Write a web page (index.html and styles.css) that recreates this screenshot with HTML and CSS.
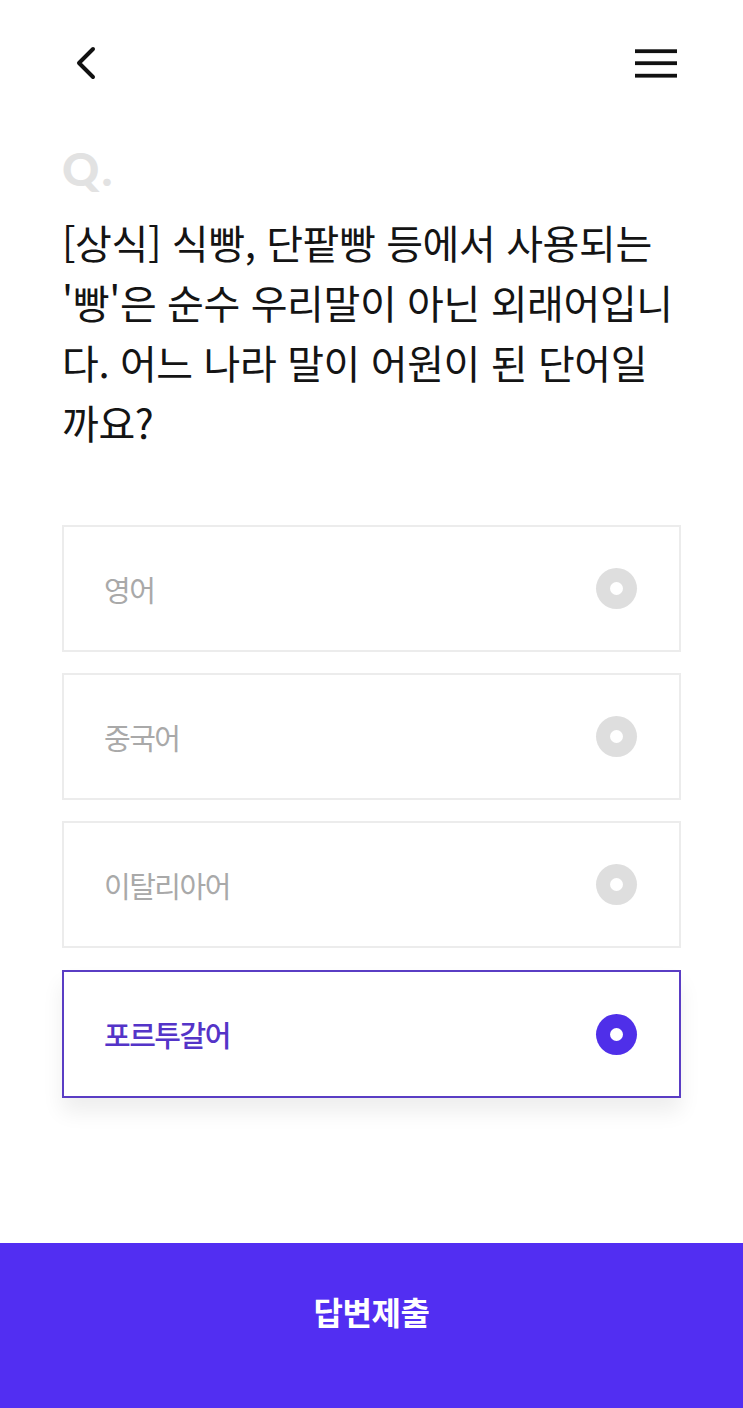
FILE: index.html
```html
<!DOCTYPE html>
<html lang="ko">
<head>
<meta charset="utf-8">
<title>Quiz</title>
<link rel="stylesheet" href="styles.css">
</head>
<body>
<div class="page">
  <header class="topbar">
    <button class="icon-btn back" aria-label="뒤로">
      <svg width="24" height="34" viewBox="0 0 24 34"><path d="M19 3 L5 17 L19 31" fill="none" stroke="#111" stroke-width="4" stroke-linecap="round" stroke-linejoin="round"/></svg>
    </button>
    <button class="icon-btn menu" aria-label="메뉴">
      <svg width="42" height="32" viewBox="0 0 42 32"><rect x="0" y="2.3" width="42" height="3.8" fill="#111"/><rect x="0" y="14.3" width="42" height="3.8" fill="#111"/><rect x="0" y="26.8" width="42" height="3.8" fill="#111"/></svg>
    </button>
  </header>
  <main class="content">
    <div class="q-mark">Q.</div>
    <p class="question">[상식] 식빵, 단팥빵 등에서 사용되는<br>'빵'은 순수 우리말이 아닌 외래어입니<br>다. 어느 나라 말이 어원이 된 단어일<br>까요?</p>
    <ul class="options">
      <li class="option"><span class="label">영어</span><span class="radio"></span></li>
      <li class="option"><span class="label">중국어</span><span class="radio"></span></li>
      <li class="option"><span class="label">이탈리아어</span><span class="radio"></span></li>
      <li class="option selected"><span class="label">포르투갈어</span><span class="radio"></span></li>
    </ul>
  </main>
  <button class="submit">답변제출</button>
</div>
</body>
</html>
```
FILE: styles.css
```css
* { box-sizing: border-box; }
html, body { margin: 0; padding: 0; background: #fff; }
body {
  font-family: "Noto Sans CJK KR", "Noto Sans", sans-serif;
  color: #111;
}
.page {
  width: 743px;
  min-height: 1408px;
  display: flex;
  flex-direction: column;
}
.topbar {
  height: 126px;
  display: flex;
  align-items: center;
  justify-content: space-between;
  padding: 0 66px 0 74px;
}
.icon-btn {
  background: none;
  border: 0;
  padding: 0;
  display: flex;
  cursor: pointer;
}
.content {
  flex: 1;
  padding: 0 62px;
}
.q-mark {
  font-family: "Lato", "Noto Sans", sans-serif;
  font-weight: 900;
  font-size: 46px;
  line-height: 46px;
  color: #e2e2e2;
  margin-top: 20px;
  letter-spacing: 3px;
}
.question {
  margin: 20px 0 0;
  font-size: 40px;
  line-height: 60px;
  font-weight: 400;
  letter-spacing: -0.4px;
  color: #141414;
}
.options {
  list-style: none;
  margin: 73px 0 0;
  padding: 0;
  display: flex;
  flex-direction: column;
  gap: 21px;
}
.option {
  height: 127px;
  border: 2px solid #ececec;
  display: flex;
  align-items: center;
  justify-content: space-between;
  padding: 0 42px 0 40px;
}
.label {
  font-size: 29px;
  color: #a9a9a9;
  letter-spacing: -1.5px;
}
.radio {
  width: 41px;
  height: 41px;
  border-radius: 50%;
  background: #dedede;
  display: flex;
  align-items: center;
  justify-content: center;
}
.radio::after {
  content: "";
  width: 13px;
  height: 13px;
  border-radius: 50%;
  background: #fff;
}
.option.selected {
  height: 128px;
  margin-top: 1px;
  border-color: #5a3dc4;
  box-shadow: 0 14px 20px rgba(0, 0, 0, 0.07);
}
.option.selected .label {
  color: #5434c8;
  font-weight: 500;
}
.option.selected .radio { background: #4f2fe9; }
.submit {
  height: 165px;
  width: 100%;
  border: 0;
  padding: 0 0 30px;
  background: #522ef2;
  color: #fff;
  font-family: "Noto Sans CJK KR", sans-serif;
  font-weight: 700;
  font-size: 32px;
  letter-spacing: -0.5px;
  cursor: pointer;
}
```
